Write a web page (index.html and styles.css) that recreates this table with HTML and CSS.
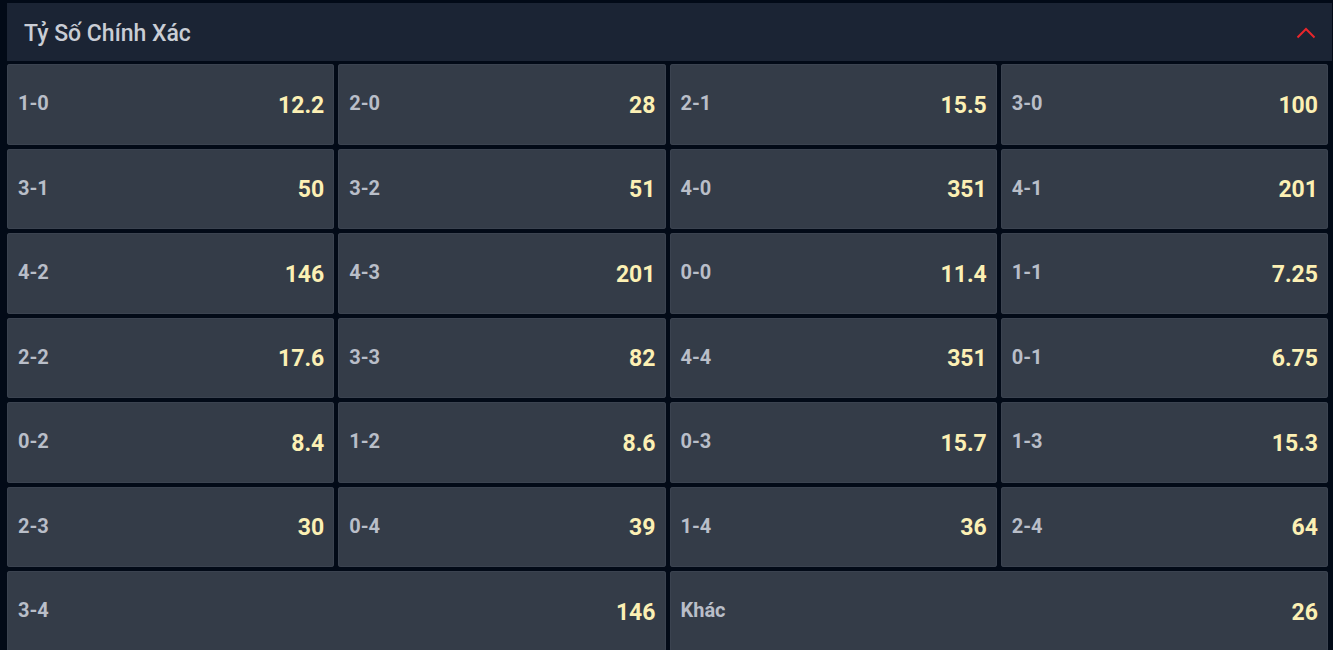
FILE: index.html
```html
<!DOCTYPE html>
<html lang="vi">
<head>
<meta charset="utf-8">
<link rel="stylesheet" href="styles.css">
</head>
<body>
<div class="market">
  <div class="market-head">
    <span class="market-title">Tỷ Số Chính Xác</span>
    <svg class="chevron" width="20" height="12" viewBox="0 0 20 12"><path d="M1.5 10.5 L10 2 L18.5 10.5" fill="none" stroke="#e8262b" stroke-width="2"/></svg>
  </div>
  <div class="grid">
    <div class="cell"><span class="lbl">1-0</span><span class="odd">12.2</span></div>
    <div class="cell"><span class="lbl">2-0</span><span class="odd">28</span></div>
    <div class="cell"><span class="lbl">2-1</span><span class="odd">15.5</span></div>
    <div class="cell"><span class="lbl">3-0</span><span class="odd">100</span></div>
    <div class="cell"><span class="lbl">3-1</span><span class="odd">50</span></div>
    <div class="cell"><span class="lbl">3-2</span><span class="odd">51</span></div>
    <div class="cell"><span class="lbl">4-0</span><span class="odd">351</span></div>
    <div class="cell"><span class="lbl">4-1</span><span class="odd">201</span></div>
    <div class="cell"><span class="lbl">4-2</span><span class="odd">146</span></div>
    <div class="cell"><span class="lbl">4-3</span><span class="odd">201</span></div>
    <div class="cell"><span class="lbl">0-0</span><span class="odd">11.4</span></div>
    <div class="cell"><span class="lbl">1-1</span><span class="odd">7.25</span></div>
    <div class="cell"><span class="lbl">2-2</span><span class="odd">17.6</span></div>
    <div class="cell"><span class="lbl">3-3</span><span class="odd">82</span></div>
    <div class="cell"><span class="lbl">4-4</span><span class="odd">351</span></div>
    <div class="cell"><span class="lbl">0-1</span><span class="odd">6.75</span></div>
    <div class="cell"><span class="lbl">0-2</span><span class="odd">8.4</span></div>
    <div class="cell"><span class="lbl">1-2</span><span class="odd">8.6</span></div>
    <div class="cell"><span class="lbl">0-3</span><span class="odd">15.7</span></div>
    <div class="cell"><span class="lbl">1-3</span><span class="odd">15.3</span></div>
    <div class="cell"><span class="lbl">2-3</span><span class="odd">30</span></div>
    <div class="cell"><span class="lbl">0-4</span><span class="odd">39</span></div>
    <div class="cell"><span class="lbl">1-4</span><span class="odd">36</span></div>
    <div class="cell"><span class="lbl">2-4</span><span class="odd">64</span></div>
    <div class="cell wide"><span class="lbl">3-4</span><span class="odd">146</span></div>
    <div class="cell wide"><span class="lbl">Khác</span><span class="odd">26</span></div>
  </div>
</div>
</body>
</html>
```
FILE: styles.css
```css
html, body {
  margin: 0;
  padding: 0;
  background: #020a17;
  font-family: Roboto, "Liberation Sans", sans-serif;
  overflow: hidden;
}
.market {
  padding: 3px 1px 0 7px;
}
.market-head {
  height: 58px;
  background: #1b2434;
  display: flex;
  align-items: center;
  justify-content: space-between;
  padding: 0 16px 0 17px;
}
.market-title {
  color: #c9cdd5;
  font-size: 23px;
  font-weight: 500;
  position: relative;
  top: 1px;
}
.chevron {
  display: block;
  position: relative;
  top: 1px;
}
.grid {
  margin-top: 3px;
  width: 1321px;
  display: grid;
  grid-template-columns: repeat(4, 1fr);
  grid-auto-rows: 80.5px;
  gap: 4px 4px;
}
.cell {
  background: #343c48;
  border-radius: 3px;
  box-shadow: inset 0 0 0 1px #3b4350;
  display: flex;
  align-items: center;
  justify-content: space-between;
  padding: 0 10px 0 11px;
}
.cell.wide {
  grid-column: span 2;
}
.lbl {
  color: #b9bec8;
  font-size: 20px;
  font-weight: 700;
  position: relative;
  top: -1px;
}
.odd {
  color: #fcf0b4;
  font-size: 23px;
  font-weight: 700;
  position: relative;
  top: 1px;
}
```
